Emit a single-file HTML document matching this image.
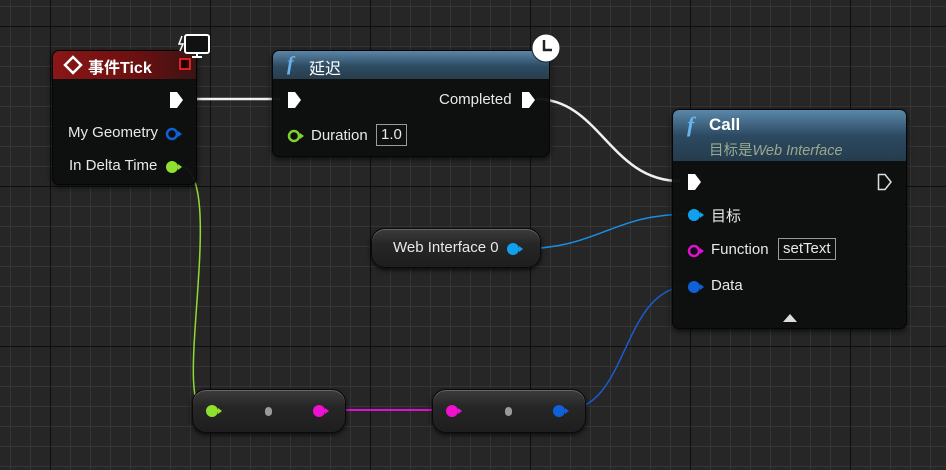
<!DOCTYPE html>
<html><head><meta charset="utf-8"><style>
*{margin:0;padding:0;box-sizing:border-box}
body{width:946px;height:470px;overflow:hidden;position:relative;font-family:"Liberation Sans","Noto Sans CJK SC",sans-serif;color:#e8e8e8;
background-color:#262626;
background-image:
linear-gradient(90deg,#0e0e0e 1px,transparent 1px),
linear-gradient(0deg,#0e0e0e 1px,transparent 1px),
linear-gradient(90deg,#353535 1px,transparent 1px),
linear-gradient(0deg,#353535 1px,transparent 1px);
background-size:160px 160px,160px 160px,20px 20px,20px 20px;
background-position:50px 0,0 27px,10px 0,0 7px;}
.node{position:absolute;background:rgba(14,16,15,.96);border-radius:7px;box-shadow:0 2px 6px rgba(0,0,0,.7);border:1px solid #050505}
.hdr{position:absolute;left:0;right:0;top:0;border-radius:6px 6px 0 0;font-size:16px;color:#fff}
.t{position:absolute;font-size:15px;white-space:nowrap}
.box{position:absolute;border:1px solid #9a9a9a;font-size:15px;padding:0 4px;height:22px;line-height:20px}
.pill{position:absolute;border-radius:14px;background:linear-gradient(#3c3c3c,#262626 40%,#1e1e1e);border:1px solid #0a0a0a;box-shadow:0 2px 5px rgba(0,0,0,.7), inset 0 1px 0 #666}
svg{position:absolute;left:0;top:0}
</style></head><body>
<svg width="946" height="470" style="z-index:0">
<path d="M196 99 L280 99" stroke="#f0f0f0" stroke-width="2.5" fill="none"/>
<path d="M536 99 C600 99 610 181 680 181" stroke="#f0f0f0" stroke-width="2.5" fill="none"/>
<path d="M178 166 C230 166 170 410 205 410" stroke="#8fdc30" stroke-width="1.5" fill="none"/>
<path d="M325 410 L450 410" stroke="#e010d0" stroke-width="2" fill="none"/>
<path d="M565 410 C630 410 620 286 690 286" stroke="#1a5cd0" stroke-width="1.5" fill="none"/>
<path d="M518 249 C600 249 610 214 690 214" stroke="#1a8ee0" stroke-width="1.5" fill="none"/>
</svg>

<!-- Tick node -->
<div class="node" style="left:52px;top:50px;width:145px;height:135px">
 <div class="hdr" style="height:28px;background:linear-gradient(90deg,#8a1616,#6a1010 60%,#3a1414)">
  <svg width="20" height="20" style="left:10px;top:4px"><path d="M10 2 L18 10 L10 18 L2 10Z" fill="none" stroke="#fff" stroke-width="2.5"/></svg>
  <span style="position:absolute;left:35px;top:3px;font-weight:bold;font-size:16px">事件Tick</span>
 </div>
 <div style="position:absolute;left:126px;top:7px;width:12px;height:12px;border:2px solid #e02020;background:#200"></div>
 <svg width="16" height="18" style="left:116px;top:40px"><path d="M1 1 H8 L14 9 L8 17 H1Z" fill="#fff"/></svg>
 <span class="t" style="left:15px;top:73px">My Geometry</span>
 <svg width="18" height="14" style="left:112px;top:76px"><circle cx="7" cy="7" r="5" fill="none" stroke="#1060d8" stroke-width="2.5"/><path d="M13 4 L17 7 L13 10Z" fill="#1060d8"/></svg>
 <span class="t" style="left:16px;top:106px">In Delta Time</span>
 <svg width="18" height="14" style="left:112px;top:109px"><circle cx="7" cy="7" r="6" fill="#90e030"/><path d="M13 4 L17 7 L13 10Z" fill="#90e030"/></svg>
</div>
<svg width="34" height="30" style="left:178px;top:33px"><rect x="7" y="2" width="24" height="18" rx="2" fill="#111" stroke="#fff" stroke-width="2"/><path d="M14 24h10M19 20v4" stroke="#fff" stroke-width="2"/><path d="M4 3 L1 11 H5 L2 18" stroke="#fff" fill="none" stroke-width="1.5"/></svg>

<!-- Delay -->
<div class="node" style="left:272px;top:50px;width:278px;height:107px">
 <div class="hdr" style="height:28px;background:linear-gradient(#5a86a8,#2c4a62 55%,#2a3d4c)">
  <span style="position:absolute;left:14px;top:2px;font-family:'Liberation Serif',serif;font-style:italic;font-weight:bold;font-size:20px;color:#6ab4ee">f</span>
  <span style="position:absolute;left:36px;top:4px">延迟</span>
 </div>
 <svg width="16" height="18" style="left:14px;top:40px"><path d="M1 1 H8 L14 9 L8 17 H1Z" fill="#fff"/></svg>
 <span class="t" style="left:166px;top:40px">Completed</span>
 <svg width="16" height="18" style="left:248px;top:40px"><path d="M1 1 H8 L14 9 L8 17 H1Z" fill="#fff"/></svg>
 <svg width="18" height="14" style="left:14px;top:78px"><circle cx="7" cy="7" r="5" fill="none" stroke="#80d030" stroke-width="2.5"/><path d="M13 4 L17 7 L13 10Z" fill="#80d030"/></svg>
 <span class="t" style="left:38px;top:76px">Duration</span>
 <div class="box" style="left:103px;top:73px">1.0</div>
</div>
<svg width="32" height="32" style="left:530px;top:32px"><circle cx="16" cy="16" r="14" fill="#fff" stroke="#222" stroke-width="1"/><path d="M14 8 V18 H22" stroke="#222" stroke-width="2.5" fill="none"/></svg>

<!-- Web interface 0 -->
<div class="pill" style="left:371px;top:228px;width:170px;height:40px">
 <span class="t" style="left:21px;top:10px">Web Interface 0</span>
 <svg width="18" height="14" style="left:134px;top:13px"><circle cx="7" cy="7" r="6" fill="#10a0f0"/><path d="M13 4 L17 7 L13 10Z" fill="#10a0f0"/></svg>
</div>

<!-- Call -->
<div class="node" style="left:672px;top:109px;width:235px;height:220px">
 <div class="hdr" style="height:51px;background:linear-gradient(#5a88aa,#2c4a62 50%,#253c4c)">
  <span style="position:absolute;left:14px;top:2px;font-family:'Liberation Serif',serif;font-style:italic;font-weight:bold;font-size:22px;color:#6ab4ee">f</span>
  <span style="position:absolute;left:36px;top:5px;font-weight:bold;font-size:17px">Call</span>
  <span style="position:absolute;left:36px;top:29px;font-size:14.5px;color:#9aa890">目标是<i>Web Interface</i></span>
 </div>
 <svg width="16" height="18" style="left:14px;top:63px"><path d="M1 1 H8 L14 9 L8 17 H1Z" fill="#fff"/></svg>
 <svg width="16" height="18" style="left:204px;top:63px"><path d="M1.5 1.5 H8 L14 9 L8 16.5 H1.5Z" fill="none" stroke="#ddd" stroke-width="1.5"/></svg>
 <svg width="18" height="14" style="left:14px;top:98px"><circle cx="7" cy="7" r="6" fill="#10a0f0"/><path d="M13 4 L17 7 L13 10Z" fill="#10a0f0"/></svg>
 <span class="t" style="left:38px;top:95px">目标</span>
 <svg width="18" height="14" style="left:14px;top:134px"><circle cx="7" cy="7" r="5" fill="none" stroke="#e010d0" stroke-width="2.5"/><path d="M13 4 L17 7 L13 10Z" fill="#e010d0"/></svg>
 <span class="t" style="left:38px;top:131px">Function</span>
 <div class="box" style="left:105px;top:128px">setText</div>
 <svg width="18" height="14" style="left:14px;top:170px"><circle cx="7" cy="7" r="6" fill="#1060d8"/><path d="M13 4 L17 7 L13 10Z" fill="#1060d8"/></svg>
 <span class="t" style="left:38px;top:167px">Data</span>
 <svg width="16" height="10" style="left:109px;top:203px"><path d="M1 9 L8 1 L15 9Z" fill="#ddd"/></svg>
</div>

<!-- reroutes -->
<div class="pill" style="left:192px;top:389px;width:154px;height:44px">
 <svg width="18" height="14" style="left:12px;top:14px"><circle cx="7" cy="7" r="6" fill="#90e030"/><path d="M13 4 L17 7 L13 10Z" fill="#90e030"/></svg>
 <div style="position:absolute;left:72px;top:17px;width:7px;height:9px;border-radius:4px;background:#999"></div>
 <svg width="18" height="14" style="left:119px;top:14px"><circle cx="7" cy="7" r="6" fill="#f010d0"/><path d="M13 4 L17 7 L13 10Z" fill="#f010d0"/></svg>
</div>
<div class="pill" style="left:432px;top:389px;width:154px;height:44px">
 <svg width="18" height="14" style="left:12px;top:14px"><circle cx="7" cy="7" r="6" fill="#f010d0"/><path d="M13 4 L17 7 L13 10Z" fill="#f010d0"/></svg>
 <div style="position:absolute;left:72px;top:17px;width:7px;height:9px;border-radius:4px;background:#999"></div>
 <svg width="18" height="14" style="left:119px;top:14px"><circle cx="7" cy="7" r="6" fill="#1060d8"/><path d="M13 4 L17 7 L13 10Z" fill="#1060d8"/></svg>
</div>
</body></html>
